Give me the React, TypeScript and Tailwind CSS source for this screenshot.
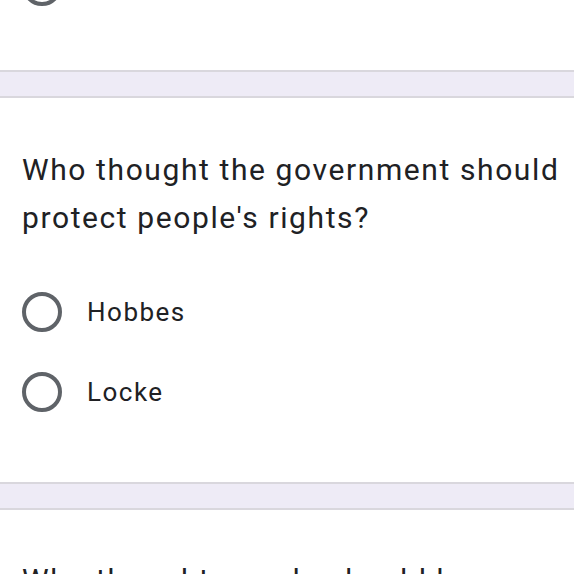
import React from "react";

function Radio({ label }: { label: string }) {
  return (
    <div className="flex items-center h-[40px]">
      <div className="w-[40px] h-[40px] rounded-full border-[4px] border-[#5f6368] shrink-0" />
      <span className="ml-[25px] text-[26px] text-[#202124] tracking-[1.5px]">{label}</span>
    </div>
  );
}

function Divider() {
  return <div className="h-[28px] bg-[#eeebf6] border-y-2 border-[#d9d7dd]" />;
}

export default function App() {
  return (
    <div className="w-[574px] h-[574px] overflow-hidden bg-white" style={{ fontFamily: "Roboto, 'Liberation Sans', sans-serif" }}>
      <div className="h-[70px] overflow-hidden px-[22px]">
        <div className="-mt-[34px]">
          <Radio label="" />
        </div>
      </div>
      <Divider />
      <div className="h-[384px] px-[22px] pt-[48px]">
        <div className="text-[30px] leading-[48px] text-[#202124] whitespace-nowrap tracking-[1.6px]">
          Who thought the government should
          <br />
          protect people's rights?
        </div>
        <div className="mt-[50px] flex flex-col gap-[40px]">
          <Radio label="Hobbes" />
          <Radio label="Locke" />
        </div>
      </div>
      <Divider />
      <div className="px-[22px] pt-[46px]">
        <div className="text-[30px] leading-[48px] text-[#202124] whitespace-nowrap tracking-[1.6px]">
          Who thought people should have
        </div>
      </div>
    </div>
  );
}
